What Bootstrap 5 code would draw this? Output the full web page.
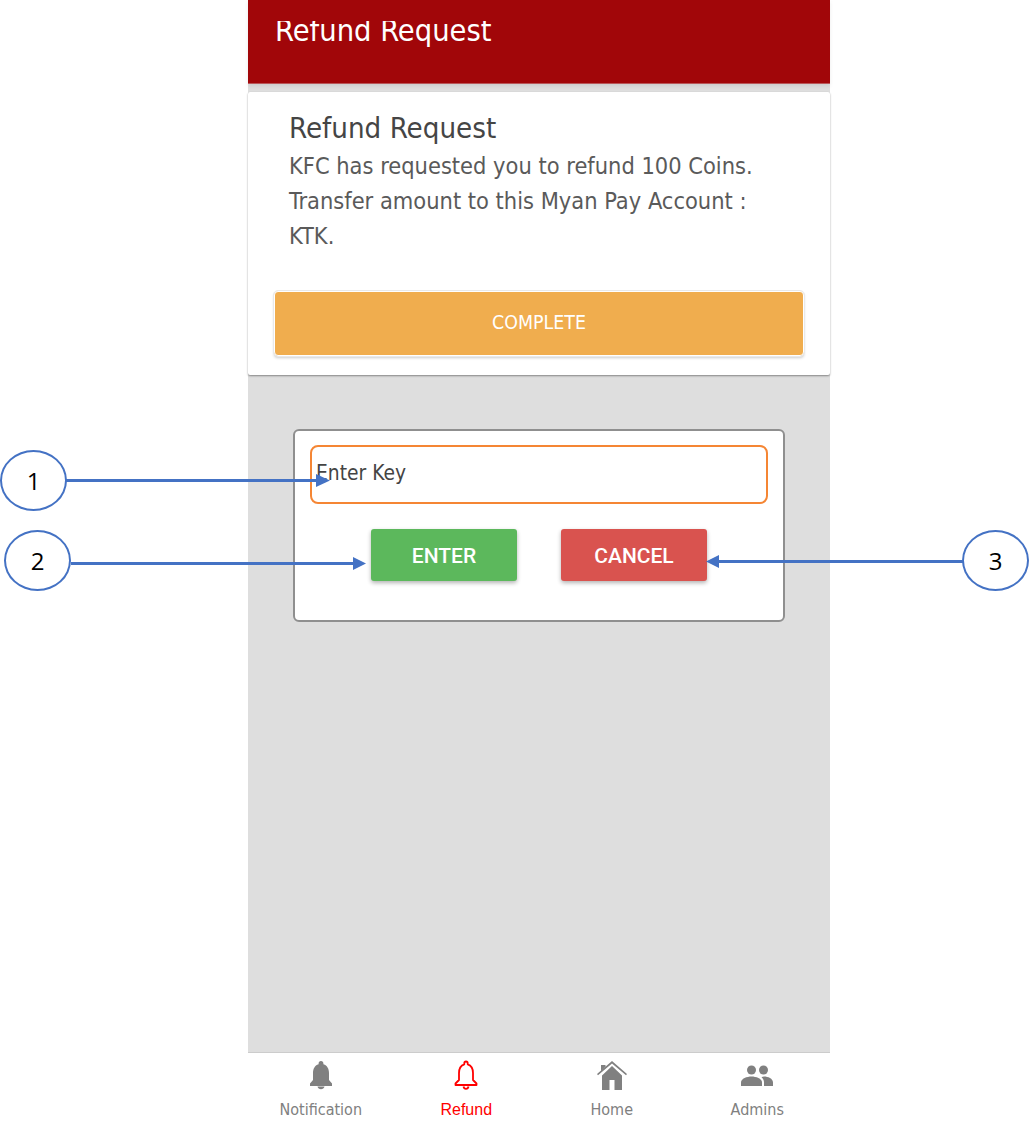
<!DOCTYPE html>
<html lang="en">
<head>
<meta charset="utf-8">
<title>Refund Request</title>
<link href="https://cdn.jsdelivr.net/npm/bootstrap@5.3.0/dist/css/bootstrap.min.css" rel="stylesheet">
<style>
html,body{height:100%;margin:0}
body{background:#fff;font-family:"DejaVu Sans Condensed","DejaVu Sans",sans-serif;overflow:hidden}
.stage{position:relative;width:1030px;height:1125px}
.phone{margin-left:248px;width:582px;height:1125px;background:#dedede}
.topbar{height:84px;background:#a10609;padding:21px 0 0 27px;border-bottom:1px solid #b9575a;box-shadow:0 2px 4px rgba(0,0,0,.08)}
.topclip{height:26px;overflow:hidden;color:#fff;font-size:30.500px;line-height:20px}
.reqcard{margin-top:8px;height:283px;border-radius:2px;box-shadow:0 1px 2px rgba(0,0,0,.4);background:#fff}
.reqbody{height:180px;padding:20px 41px 0;color:#555}
.reqtitle{font-size:29.200px;line-height:32px;color:#454545;margin:0 0 5px}
.reqtext{font-size:23.400px;line-height:35px;margin:0;color:#5a5a5a}
.reqfoot{padding:19px 26px 0 26px}
.btncomplete{display:block;width:100%;height:65px;background:#f0ad4e;border:1px solid #fff;outline:1px solid #e9e9e9;color:#fff;font-size:19.400px;line-height:1;border-radius:4px;box-shadow:0 2px 3px rgba(0,0,0,.2);padding:0 0 2px}
.keybox{margin:54px 45px 0 45px;height:193px;background:#fff;border:2px solid #8f8f8f;border-radius:6px;padding:14px 15px 0 15px}
.keyinput{height:59px;border:2px solid #f58634;border-radius:8px;padding:1px 0 0 4px;font-size:20.800px;line-height:50px;color:#444;background:#fff}
.keyactions{margin-top:25px;padding-left:61px;gap:44px}
.btnkey{width:146px;height:52px;border:0;border-radius:3px;color:#fff;font-family:Roboto,sans-serif;font-weight:500;font-size:21px;box-shadow:0 2px 4px rgba(0,0,0,.3);padding:4px 0 0}
.btnok{background:#5cb85c}
.btnno{background:#d9534f}
.tabbar{height:73px;background:#fff;border-top:1px solid #ccc;margin-top:auto}
.tabitem{width:145.500px;color:#808080;font-size:16px;line-height:20px;padding-top:3px}
.tabitem svg{display:block;margin:0 auto 8px;height:36px;width:36px}
.tabon{color:#f00;font-family:"Liberation Sans",sans-serif}
.callout{position:absolute;border:2px solid #4472c4;border-radius:50%;background:#fff;display:flex;align-items:center;justify-content:center;color:#000;font-family:"Open Sans",sans-serif;font-size:24px;width:67px;height:61px}
.callout-a{left:0;top:450px}
.callout-b{left:4px;top:530px}
.callout-c{left:962px;top:530px}
.arrow{position:absolute;left:0;top:0;width:1030px;height:1125px;pointer-events:none}
</style>
</head>
<body>
<div class="stage">
  <div class="phone d-flex flex-column">
    <div class="topbar"><div class="topclip">Refund Request</div></div>
    <div class="reqcard">
      <div class="reqbody">
        <h1 class="reqtitle">Refund Request</h1>
        <p class="reqtext">KFC has requested you to refund 100 Coins.<br>Transfer amount to this Myan Pay Account :<br>KTK.</p>
      </div>
      <div class="reqfoot"><button class="btncomplete" type="button">COMPLETE</button></div>
    </div>
    <div class="keybox">
      <div class="keyinput">Enter Key</div>
      <div class="keyactions d-flex">
        <button class="btnkey btnok" type="button">ENTER</button>
        <button class="btnkey btnno" type="button">CANCEL</button>
      </div>
    </div>
    <nav class="tabbar d-flex text-center">
      <div class="tabitem">
        <svg viewBox="0 0 36 36"><path fill="#808080" d="M18 5c-1.500 0-2.400 1-2.400 2.400v.8C11.500 9.500 10 13 10 17v7l-3 3.500V30h22v-2.500L26 24v-7c0-4-1.500-7.500-5.600-8.800v-.8C20.400 6 19.500 5 18 5zM14.500 30.500c.4 1.800 1.800 2.700 3.500 2.700s3.100-.9 3.500-2.700z"/></svg>
        Notification
      </div>
      <div class="tabitem tabon">
        <svg viewBox="0 0 36 36"><path fill="none" stroke="#f00" stroke-width="1.800" stroke-linejoin="round" d="M18 5.500c-1 0-1.700.8-1.700 1.800v1C12.500 9.500 11 13 11 17v7l-3.500 3.500V29h21v-1.500L25 24v-7c0-4-1.500-7.500-5.300-8.700v-1c0-1-.7-1.800-1.700-1.800z"/><path fill="none" stroke="#f00" stroke-width="1.800" d="M15.500 30.500c.3 1.600 1.200 2.300 2.500 2.300s2.200-.7 2.500-2.300"/></svg>
        Refund
      </div>
      <div class="tabitem">
        <svg viewBox="0 0 36 36"><path fill="#808080" d="M18 5 3 18l1 1.300L18 7.500l14 11.800 1-1.300-15-13zM7 9h4.500v1.500L7 14.500zM8 19.500V34h7.500V24h5v10H28V19.500L18 10z"/></svg>
        Home
      </div>
      <div class="tabitem">
        <svg viewBox="0 0 36 36"><g fill="#808080"><circle cx="12.500" cy="14" r="4.500"/><circle cx="24.500" cy="14" r="4.500"/><path d="M2 30v-3.500C2 22.500 8 20.500 12.500 20.500S23 22.500 23 26.500V30z"/><path d="M25 30v-3.500c0-2.200-1-3.900-2.500-5.200.8-.5 1.500-.8 2.500-.8 4 0 9 2 9 6V30z"/></g></svg>
        Admins
      </div>
    </nav>
  </div>

  <svg class="arrow" viewBox="0 0 1030 1125">
    <g fill="#4472c4" stroke="none">
      <rect x="66" y="479" width="252" height="3"/><path d="M316 474l14 6.500-14 6.500z"/>
      <rect x="71" y="562" width="285" height="3"/><path d="M353 557l13 6.500-13 6.500z"/>
      <rect x="717" y="560" width="246" height="3"/><path d="M719 555l-13 6.500 13 6.500z"/>
    </g>
  </svg>
  <div class="callout callout-a">1</div>
  <div class="callout callout-b">2</div>
  <div class="callout callout-c">3</div>
</div>
<script src="https://cdn.jsdelivr.net/npm/bootstrap@5.3.0/dist/js/bootstrap.bundle.min.js"></script>
</body>
</html>
